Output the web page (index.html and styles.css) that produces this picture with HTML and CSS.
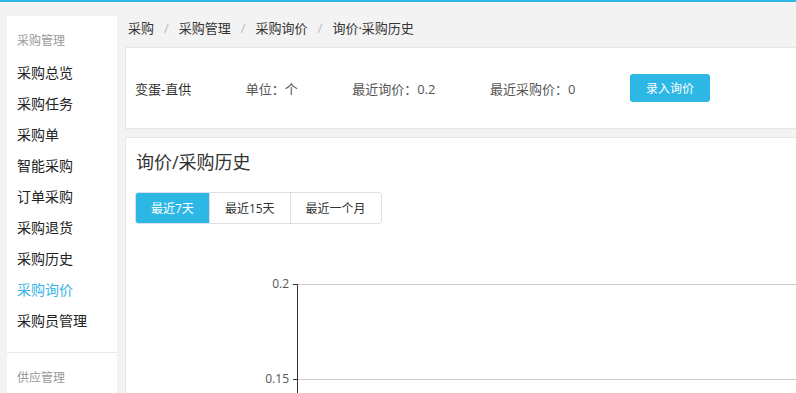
FILE: index.html
```html
<!DOCTYPE html>
<html lang="zh-CN">

<head>
  <meta charset="UTF-8">
  <meta name="viewport" content="width=device-width, initial-scale=1.0">
  <title>询价·采购历史</title>
  <link rel="stylesheet" href="styles.css">
</head>

<body>
  <div class="topline"></div>
  <div class="layout">
    <div class="side">
      <div class="menu-group">
        <p class="menu-title">采购管理</p>
        <ul>
          <li>采购总览</li>
          <li>采购任务</li>
          <li>采购单</li>
          <li>智能采购</li>
          <li>订单采购</li>
          <li>采购退货</li>
          <li>采购历史</li>
          <li class="cur">采购询价</li>
          <li>采购员管理</li>
        </ul>
      </div>
      <div class="menu-group">
        <p class="menu-title">供应管理</p>
      </div>
    </div>

    <div class="main">
      <div class="crumb">
        <span>采购</span><i>/</i><span>采购管理</span><i>/</i><span>采购询价</span><i>/</i><span>询价·采购历史</span>
      </div>

      <div class="card info">
        <span class="name">变蛋-直供</span>
        <span>单位：个</span>
        <span>最近询价：0.2</span>
        <span>最近采购价：0</span>
        <button class="btn">录入询价</button>
      </div>

      <div class="card history">
        <h2>询价/采购历史</h2>
        <div class="tabs">
          <button class="cur">最近7天</button>
          <button>最近15天</button>
          <button>最近一个月</button>
        </div>
        <svg class="chart" width="700" height="170">
          <line x1="161.5" y1="60.5" x2="700" y2="60.5" class="grid" />
          <line x1="161.5" y1="155.5" x2="700" y2="155.5" class="grid" />
          <line x1="157" y1="60.5" x2="161.5" y2="60.5" class="axis" />
          <line x1="157" y1="155.5" x2="161.5" y2="155.5" class="axis" />
          <line x1="161.5" y1="60" x2="161.5" y2="170" class="axis" />
          <text x="153" y="64" text-anchor="end">0.2</text>
          <text x="153" y="159" text-anchor="end">0.15</text>
        </svg>
      </div>
    </div>
  </div>
</body>

</html>
```

FILE: styles.css
```css
* {
  margin: 0;
  padding: 0;
  box-sizing: border-box;
}

li {
  list-style: none;
}

html,
body {
  height: 100%;
}

body {
  background-color: #f3f3f3;
  font-family: "Open Sans", "Noto Sans CJK SC", sans-serif;
  color: #333;
  overflow: hidden;
}

.topline {
  height: 2px;
  background-color: #2db7e5;
}

.layout {
  display: flex;
  height: calc(100% - 2px);
  padding: 14px 0 0 7px;
}

.side {
  width: 110px;
  margin-right: 8px;
  background-color: #fff;
  overflow: hidden;
}

.menu-group {
  padding: 14px 0 16px 10px;
  border-bottom: 1px solid #e8e8e8;
}

.menu-title {
  font-size: 12px;
  line-height: 22px;
  color: #999;
  margin-bottom: 5px;
}

.menu-group li {
  font-size: 14px;
  line-height: 31px;
  color: #222;
}

.menu-group .cur {
  color: #3ab4e6;
}

.main {
  flex: 1;
  min-width: 0;
  display: flex;
  flex-direction: column;
}

.crumb {
  font-size: 13px;
  line-height: 24px;
  padding: 0 0 7px 3px;
  color: #333;
}

.crumb i {
  font-style: normal;
  color: #bbb;
  padding: 0 10px;
}

.card {
  background-color: #fff;
  border: 1px solid #e6e6e6;
  border-right: 0;
}

.info {
  display: flex;
  align-items: center;
  gap: 54.5px;
  padding: 26px 9px;
  font-size: 13px;
  color: #555;
}

.info .name {
  color: #333;
}

.btn {
  width: 80px;
  height: 28px;
  border: 0;
  border-radius: 3px;
  background-color: #2db7e5;
  color: #fff;
  font-family: inherit;
  font-size: 12px;
}

.history {
  flex: 1;
  margin-top: 8px;
  padding: 12px 0 0 9px;
  border-bottom: 0;
  overflow: hidden;
}

.history h2 {
  font-size: 18px;
  font-weight: normal;
  line-height: 24px;
  color: #333;
  margin-bottom: 18px;
  padding-left: 1px;
}

.tabs {
  display: inline-flex;
  border: 1px solid #dcdfe6;
  border-radius: 3px;
  overflow: hidden;
}

.tabs button {
  height: 30px;
  padding: 0 15px;
  border: 0;
  border-left: 1px solid #dcdfe6;
  background-color: #fff;
  color: #333;
  font-family: inherit;
  font-size: 12px;
}

.tabs button:first-child {
  border-left: 0;
}

.tabs .cur {
  background-color: #2db7e5;
  color: #fff;
}

.chart {
  display: block;
  margin-left: 1px;
}

.chart .grid {
  stroke: #ccc;
  stroke-width: 1;
}

.chart .axis {
  stroke: #333;
  stroke-width: 1;
}

.chart text {
  font-size: 12px;
  fill: #555;
  font-family: "Open Sans", sans-serif;
}
```
